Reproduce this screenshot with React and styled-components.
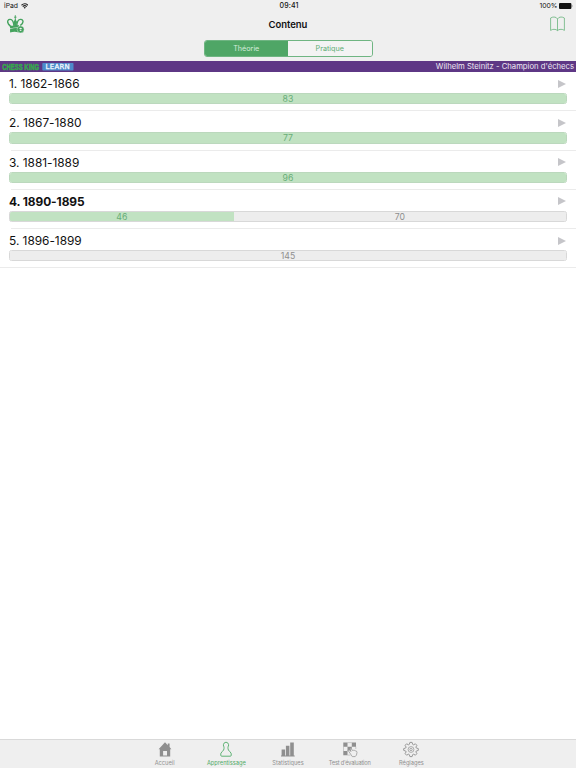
import styled, { createGlobalStyle } from 'styled-components';

const GlobalStyle = createGlobalStyle`
  * {
    box-sizing: border-box;
  }

  body {
    margin: 0;
    background: #ffffff;
    font-family: Inter, 'Liberation Sans', sans-serif;
    color: #111111;
  }
`;

const Screen = styled.div`
  height: 100vh;
  display: flex;
  flex-direction: column;
  overflow: hidden;
`;

const Header = styled.header`
  height: 61px;
  background: #efefef;
  flex-shrink: 0;
`;

const StatusBar = styled.div`
  height: 12px;
  padding: 0 3px 0 4px;
  display: grid;
  grid-template-columns: 1fr auto 1fr;
  align-items: center;
  font-size: 6.8px;
  line-height: 12px;
`;

const StatusSide = styled.div`
  display: flex;
  align-items: center;
  gap: ${({ $end }) => ($end ? '1.5px' : '3px')};
  justify-content: ${({ $end }) => ($end ? 'flex-end' : 'flex-start')};
`;

const Clock = styled.span`
  margin-left: 1px;
  font-weight: 500;
  font-size: 7px;
  letter-spacing: 0.1px;
`;

const NavBar = styled.div`
  height: 24px;
  padding: 0 10px 0 7px;
  display: grid;
  grid-template-columns: 1fr auto 1fr;
  align-items: center;

  svg {
    display: block;
  }

  svg:last-child {
    justify-self: end;
  }
`;

const Title = styled.h1`
  margin: 0 0 0 3px;
  padding-top: 1px;
  font-size: 9.5px;
  line-height: 12px;
  font-weight: 600;
  letter-spacing: -0.05px;
`;

const Segments = styled.div`
  width: 169px;
  height: 17px;
  margin: 4px auto 0;
  display: flex;
  border: 1px solid #6fb582;
  border-radius: 3px;
  overflow: hidden;
`;

const Segment = styled.button`
  flex: 1;
  padding: 0;
  border: 0;
  font-family: inherit;
  font-size: 7.2px;
  line-height: 15px;
  background: ${({ $active }) => ($active ? '#4fa666' : '#f3f3f3')};
  color: ${({ $active }) => ($active ? '#d6ecdb' : '#60ad74')};
`;

const Banner = styled.div`
  height: 11px;
  padding: 0 2px;
  display: flex;
  align-items: center;
  background: #5e3785;
  flex-shrink: 0;
`;

const BrandSvg = styled.svg`
  display: block;
  flex-shrink: 0;
`;

const Course = styled.span`
  margin-left: auto;
  font-size: 7.7px;
  line-height: 11px;
  color: #eee8f3;
`;

const List = styled.main`
  flex: 1;
`;

const Row = styled.section`
  height: 39.25px;
  padding: 3px 9px 0;
  position: relative;

  &::after {
    content: '';
    position: absolute;
    left: ${({ $last }) => ($last ? '0' : '11px')};
    right: 0;
    bottom: 0;
    height: 1px;
    background: #ebebeb;
  }
`;

const RowHead = styled.div`
  height: 18px;
  padding-bottom: 1px;
  display: flex;
  align-items: center;
  justify-content: space-between;
`;

const RowTitle = styled.h2`
  margin: 0;
  font-size: 11.9px;
  line-height: 15px;
  font-weight: ${({ $bold }) => ($bold ? 700 : 400)};
  letter-spacing: ${({ $bold }) => ($bold ? '-0.08px' : '-0.03px')};
`;

const Arrow = styled.span`
  width: 0;
  height: 0;
  margin-right: 1px;
  border-left: 8px solid #c5c5c9;
  border-top: 4.5px solid transparent;
  border-bottom: 4.5px solid transparent;
`;

const Progress = styled.div`
  height: 11.3px;
  display: flex;
  border: 1px solid ${({ $full }) => ($full ? '#bbd8bd' : '#d8d8d8')};
  border-radius: 2.5px;
  background: #ededed;
  overflow: hidden;
`;

const Part = styled.span`
  text-align: center;
  font-size: 8.7px;
  letter-spacing: 0.1px;
  line-height: 10.4px;
  background: ${({ $done }) => ($done ? '#c1e2c2' : '#ededed')};
  color: ${({ $done }) => ($done ? '#68ae78' : '#8d8d8d')};
`;

const TabBar = styled.nav`
  height: 29px;
  display: flex;
  justify-content: center;
  background: #efefef;
  border-top: 1px solid #d9d9d9;
  flex-shrink: 0;
`;

const Tab = styled.div`
  width: 61.7px;
  padding-top: 1px;
  display: flex;
  flex-direction: column;
  align-items: center;
  color: ${({ $active }) => ($active ? '#4fab68' : '#8f8f8f')};
  font-size: 5.7px;
  line-height: 8px;
  letter-spacing: ${({ $tight }) => ($tight ? '-0.23px' : '0')};
  white-space: nowrap;

  svg {
    width: 16px;
    height: 17px;
    margin-bottom: 0.5px;
  }
`;

const chapters = [
  { title: '1. 1862-1866', done: 83, left: 0 },
  { title: '2. 1867-1880', done: 77, left: 0 },
  { title: '3. 1881-1889', done: 96, left: 0 },
  { title: '4. 1890-1895', done: 46, left: 70, current: true },
  { title: '5. 1896-1899', done: 0, left: 145 },
];

function WifiIcon() {
  return (
    <svg width="7.5" height="6" viewBox="0 0 15 12" fill="none" stroke="#222" strokeWidth="2.2">
      <path d="M1 4.5Q7.5-1.5 14 4.5M3.5 7.2Q7.5 3.5 11.5 7.2" />
      <path d="M7.5 11.5L5.2 9Q7.5 7.2 9.8 9Z" fill="#222" stroke="none" />
    </svg>
  );
}

function BatteryIcon() {
  return (
    <svg width="14" height="6" viewBox="0 0 14 6">
      <rect x="0" y="0" width="12.4" height="6" rx="1" fill="#111" />
      <path d="M12.9 2Q14 3 12.9 4Z" fill="#111" />
    </svg>
  );
}

function KingLogo() {
  return (
    <svg width="18" height="18" viewBox="0 0 18 18" fill="none" stroke="#45a35e">
      <path d="M8.3 .2v6M7.1 2.2h2.4" strokeWidth=".9" />
      <path
        d="M3.4 11C1.2 9.2 .2 7 1 5.5S4.4 3.9 5.7 6C6.6 7.6 6.8 9.5 7 11M13.2 10.6C15.6 8.8 16.5 7 15.7 5.5S12.2 3.9 10.9 6C10 7.6 9.8 9.5 9.7 11"
        strokeWidth="1.4"
      />
      <path d="M8.3 4L6.5 7L7.4 11H9.3L10.1 7Z" fill="#45a35e" stroke="none" />
      <path
        d="M1.6 9.2Q3.4 11 5.4 10.8Q8 10 12 10.2V12.6Q7.5 12 3.3 13.5L2.7 11.3ZM3 14.2Q7 12.7 11 13.2V17.2Q7 16.2 3.1 17.6Z"
        fill="#45a35e"
        stroke="none"
      />
      <circle cx="13.6" cy="14.4" r="3.5" fill="#45a35e" stroke="#efefef" strokeWidth=".4" />
      <path
        d="M12 13.6L13.6 12.7L15.2 13.6L13.6 14.5ZM12.8 14.8V15.8Q13.6 16.3 14.4 15.8V14.8L13.6 15.3Z"
        fill="#efefef"
        stroke="none"
      />
    </svg>
  );
}

function BookIcon() {
  return (
    <svg width="16" height="16" viewBox="0 0 16 16" fill="none" stroke="#68b47c" strokeWidth=".8">
      <path d="M7.5 3Q6.5 1 4 1Q2.2 1 .6 2V14.4Q2.2 13.3 4 13.3Q6.4 13.3 7.5 14.6Q8.6 13.3 11 13.3Q12.8 13.3 14.4 14.4V2Q12.8 1 11 1Q8.5 1 7.5 3V14.6" />
    </svg>
  );
}

function Brand() {
  return (
    <BrandSvg width="73" height="11" viewBox="0 0 73 11">
      <g transform="scale(.62 1)">
        <text
          x="0.4"
          y="9"
          fontFamily="'Liberation Sans'"
          fontSize="9.6"
          fontWeight="700"
          fill="#36a84e"
          stroke="#36a84e"
          strokeWidth=".6"
        >
          CHESS KING
        </text>
      </g>
      <rect x="40.3" y="2" width="31.2" height="7.4" rx=".7" fill="#4d8bcb" />
      <g fontFamily="'DejaVu Sans'" fontSize="6.9" letterSpacing=".3" fill="#f4f8fc" stroke="#f4f8fc" strokeWidth=".3">
        <text x="43.6" y="8.3">
          LEARN
        </text>
      </g>
    </BrandSvg>
  );
}

function HomeIcon() {
  return (
    <svg viewBox="0 0 16 17" fill="currentColor">
      <path
        fillRule="evenodd"
        d="M8 1.2L10.8 4.2V2.5H12.6V6.1L14.4 8.2H13.2V15.6H2.8V8.2H1.6ZM6.1 10V14.6H10V10Z"
      />
    </svg>
  );
}

function PawnIcon() {
  return (
    <svg viewBox="0 0 16 17" fill="none" stroke="currentColor" strokeWidth=".9">
      <path d="M6.3 6.2Q5.2 5.2 5.4 3.7Q5.8 1.3 8 1.2Q10.2 1.3 10.6 3.7Q10.8 5.2 9.7 6.2Q10.6 6.6 10 7.6Q10 9 11.6 10.4Q13.7 12 13.3 14.2Q13.2 15.2 12.2 15.2H3.8Q2.8 15.2 2.7 14.2Q2.3 12 4.4 10.4Q6 9 6 7.6Q5.4 6.6 6.3 6.2Z" />
    </svg>
  );
}

function ChartIcon() {
  return (
    <svg viewBox="0 0 16 17" fill="currentColor">
      <path d="M1.6 8.4H5.1V14.5H1.6ZM5.9 4.8H9.4V14.5H5.9ZM10.2 1.6H13.8V14.5H10.2ZM1 14.4H14.7V15.6H1Z" />
    </svg>
  );
}

function BoardIcon() {
  return (
    <svg viewBox="0 0 16 17" fill="currentColor">
      <path d="M1.3 1.4H5.5V5.7H1.3ZM9.8 1.4H14V5.7H9.8ZM5.5 5.7H9.8V10H5.5ZM1.3 10H5.5V14.3H1.3Z" />
      <path d="M1.5 5.7V10M5.5 1.6H9.8M13.8 5.7V8M5.5 14.1H8.5" fill="none" stroke="currentColor" strokeWidth=".4" />
      <path
        d="M9 13.7L6.3 9.7Q6.1 8.6 7.2 8.7L8.9 10.6L8.2 7.9Q8.6 6.9 9.5 7.8L10.4 9.5Q11.1 8.6 11.8 9.5Q12.8 8.8 13.3 9.9Q14.7 9.5 15 11.3L14.5 14L13.2 15.6H10.3Z"
        fill="#efefef"
        stroke="currentColor"
        strokeWidth=".7"
      />
    </svg>
  );
}

function GearIcon() {
  return (
    <svg viewBox="0 0 16 17" fill="none" stroke="currentColor" strokeWidth=".9" strokeLinejoin="round">
      <path d="M6.3 3.4L6.9 1.4H9.1L9.7 3.4L10.6 3.8L12.4 2.8L13.9 4.3L12.9 6.1L13.3 7L15.3 7.6V9.4L13.3 10L12.9 10.9L13.9 12.7L12.4 14.2L10.6 13.2L9.7 13.6L9.1 15.6H6.9L6.3 13.6L5.4 13.2L3.6 14.2L2.1 12.7L3.1 10.9L2.7 10L.7 9.4V7.6L2.7 7L3.1 6.1L2.1 4.3L3.6 2.8L5.4 3.8Z" />
      <circle cx="8" cy="8.5" r="2.9" strokeWidth=".7" />
      <circle cx="8" cy="8.5" r="1.2" strokeWidth=".7" />
    </svg>
  );
}

const tabs = [
  { label: 'Accueil', Icon: HomeIcon },
  { label: 'Apprentissage', Icon: PawnIcon, active: true },
  { label: 'Statistiques', Icon: ChartIcon },
  { label: "Test d'évaluation", Icon: BoardIcon, tight: true },
  { label: 'Réglages', Icon: GearIcon },
];

function Chapter({ title, done, left, current, last }) {
  const total = done + left;

  return (
    <Row $last={last}>
      <RowHead>
        <RowTitle $bold={current}>{title}</RowTitle>
        <Arrow />
      </RowHead>
      <Progress $full={left === 0}>
        {done > 0 && (
          <Part $done style={{ width: `${(done / total) * 100 + (left ? 0.6 : 0)}%` }}>
            {done}
          </Part>
        )}
        {left > 0 && <Part style={{ flex: 1 }}>{left}</Part>}
      </Progress>
    </Row>
  );
}

export default function App() {
  return (
    <Screen>
      <GlobalStyle />
      <Header>
        <StatusBar>
          <StatusSide>
            <span>iPad</span>
            <WifiIcon />
          </StatusSide>
          <Clock>09:41</Clock>
          <StatusSide $end>
            <span>100%</span>
            <BatteryIcon />
          </StatusSide>
        </StatusBar>
        <NavBar>
          <KingLogo />
          <Title>Contenu</Title>
          <BookIcon />
        </NavBar>
        <Segments>
          <Segment $active>Théorie</Segment>
          <Segment>Pratique</Segment>
        </Segments>
      </Header>
      <Banner>
        <Brand />
        <Course>Wilhelm Steinitz - Champion d'échecs</Course>
      </Banner>
      <List>
        {chapters.map((chapter, i) => (
          <Chapter key={chapter.title} {...chapter} last={i === chapters.length - 1} />
        ))}
      </List>
      <TabBar>
        {tabs.map(({ label, Icon, active, tight }) => (
          <Tab key={label} $active={active} $tight={tight}>
            <Icon />
            {label}
          </Tab>
        ))}
      </TabBar>
    </Screen>
  );
}
